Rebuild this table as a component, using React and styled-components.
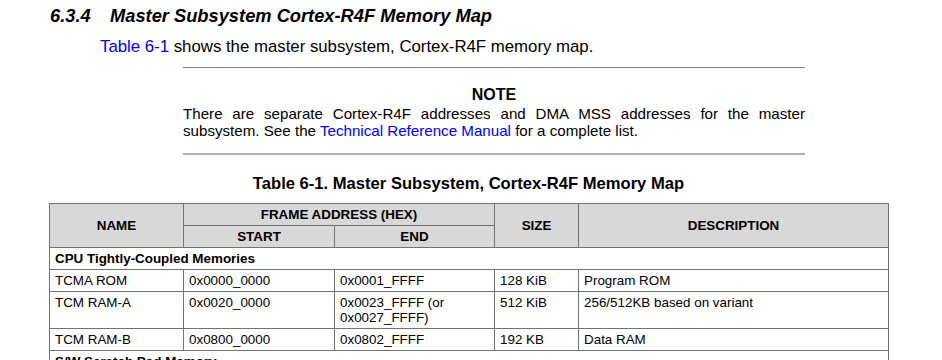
import React from 'react'
import styled, { createGlobalStyle } from 'styled-components'

const GlobalStyle = createGlobalStyle`
  html, body {
    margin: 0;
    padding: 0;
    background: #fff;
    overflow: hidden;
  }
  body {
    font-family: 'Liberation Sans', Arial, sans-serif;
    color: #000;
  }
`

const Page = styled.div`
  width: 942px;
  padding-top: 5px;
`

const Heading = styled.h3`
  margin: 0;
  padding-left: 50px;
  font-size: 18.3px;
  line-height: 22px;
  font-weight: bold;
  font-style: italic;
  display: flex;
`

const HeadingNum = styled.span`
  width: 60px;
`

const Para = styled.p`
  margin: 10px 0 0;
  padding-left: 100px;
  font-size: 16.8px;
  line-height: 20px;
`

const Link = styled.a`
  color: #0000ff;
  text-decoration: none;
`

const Note = styled.div`
  margin: 10px 0 0 183px;
  width: 622px;
  border-top: 1px solid #858585;
  border-bottom: 2px solid #b0b0b0;
  padding: 17px 0 14px;
`

const NoteTitle = styled.div`
  text-align: center;
  font-weight: bold;
  font-size: 16px;
  line-height: 20px;
`

const NoteLine = styled.div`
  font-size: 15.15px;
  line-height: 17px;
  text-align: ${p => (p.$full ? 'justify' : 'left')};
  text-align-last: ${p => (p.$full ? 'justify' : 'left')};
`

const Caption = styled.div`
  margin: 20px 0 0 49px;
  width: 839px;
  text-align: center;
  font-weight: bold;
  font-size: 16.6px;
  line-height: 18px;
`

const Table = styled.table`
  margin: 10px 0 0 49px;
  width: 840px;
  border-collapse: collapse;
  table-layout: fixed;
  font-size: 13.4px;
  line-height: 15px;
`

const Th = styled.th`
  background: #d8d8d8;
  border: 1px solid #737373;
  padding: 3px 5px;
  font-weight: bold;
  text-align: center;
  vertical-align: middle;
`

const Td = styled.td`
  border: 1px solid #737373;
  padding: 3px 5px;
  text-align: left;
  vertical-align: top;
  font-weight: ${p => (p.$section ? 'bold' : 'normal')};
`

const rows = [
  { section: 'CPU Tightly-Coupled Memories' },
  { name: 'TCMA ROM', start: '0x0000_0000', end: '0x0001_FFFF', size: '128 KiB', desc: 'Program ROM' },
  { name: 'TCM RAM-A', start: '0x0020_0000', end: '0x0023_FFFF (or 0x0027_FFFF)', size: '512 KiB', desc: '256/512KB based on variant' },
  { name: 'TCM RAM-B', start: '0x0800_0000', end: '0x0802_FFFF', size: '192 KB', desc: 'Data RAM' },
  { section: 'S/W Scratch Pad Memory' },
]

export default function App() {
  return (
    <Page>
      <GlobalStyle />
      <Heading>
        <HeadingNum>6.3.4</HeadingNum>
        Master Subsystem Cortex-R4F Memory Map
      </Heading>
      <Para>
        <Link href="#table-6-1">Table 6-1</Link> shows the master subsystem, Cortex-R4F memory map.
      </Para>
      <Note>
        <NoteTitle>NOTE</NoteTitle>
        <NoteLine $full>There are separate Cortex-R4F addresses and DMA MSS addresses for the master</NoteLine>
        <NoteLine>
          subsystem. See the <Link href="#trm">Technical Reference Manual</Link> for a complete list.
        </NoteLine>
      </Note>
      <Caption>Table 6-1. Master Subsystem, Cortex-R4F Memory Map</Caption>
      <Table>
        <colgroup>
          <col style={{ width: 134 }} />
          <col style={{ width: 151 }} />
          <col style={{ width: 160 }} />
          <col style={{ width: 84 }} />
          <col />
        </colgroup>
        <thead>
          <tr>
            <Th rowSpan={2}>NAME</Th>
            <Th colSpan={2}>FRAME ADDRESS (HEX)</Th>
            <Th rowSpan={2}>SIZE</Th>
            <Th rowSpan={2}>DESCRIPTION</Th>
          </tr>
          <tr>
            <Th>START</Th>
            <Th>END</Th>
          </tr>
        </thead>
        <tbody>
          {rows.map((r, i) =>
            r.section ? (
              <tr key={i}>
                <Td $section colSpan={5}>{r.section}</Td>
              </tr>
            ) : (
              <tr key={i}>
                <Td>{r.name}</Td>
                <Td>{r.start}</Td>
                <Td>{r.end}</Td>
                <Td>{r.size}</Td>
                <Td>{r.desc}</Td>
              </tr>
            )
          )}
        </tbody>
      </Table>
    </Page>
  )
}
